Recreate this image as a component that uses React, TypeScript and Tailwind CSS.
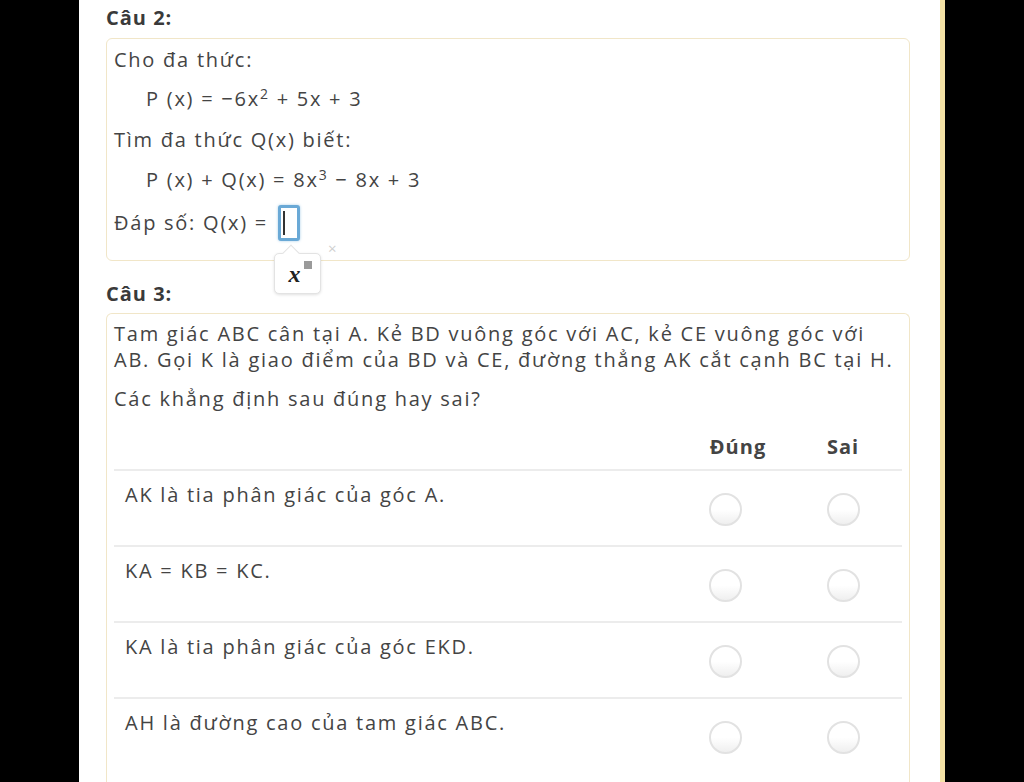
import * as React from "react";

const rows = [
  "AK là tia phân giác của góc A.",
  "KA = KB = KC.",
  "KA là tia phân giác của góc EKD.",
  "AH là đường cao của tam giác ABC.",
];

function Radio() {
  return (
    <span className="block h-[33px] w-[33px] rounded-full border-2 border-[#e2e2e2] bg-linear-to-b from-white from-50% to-[#efefef]" />
  );
}

function MathInput() {
  return (
    <span className="relative ml-[10px] inline-block">
      <span className="flex h-[36px] w-[22px] items-center rounded-[3px] border-[3px] border-[#6aa9d6] bg-white pl-[2px] shadow-[0_0_3px_#a9cfe9]">
        <span className="block h-[24px] w-[2px] bg-[#333]" />
      </span>
      {/* formatting popup */}
      <span className="absolute left-[-4px] top-[48px] flex h-[41px] w-[47px] items-center justify-center rounded-[5px] border border-[#e3e3e3] bg-white shadow-[0_1px_3px_rgba(0,0,0,0.12)]">
        <span className="absolute left-[10px] top-[-7px] h-[12px] w-[12px] rotate-45 border-l border-t border-[#e3e3e3] bg-white" />
        <span className="relative -ml-[6px] font-['Liberation_Serif',serif] text-[24px] font-bold italic leading-none tracking-normal text-[#222]">
          x
          <span className="absolute right-[-11px] top-[-1px] block h-[8px] w-[8px] bg-[#9a9a9a]" />
        </span>
      </span>
      <span className="absolute left-[50px] top-[36px] text-[15px] leading-none tracking-normal text-[#cfcfcf]">×</span>
    </span>
  );
}

export default function App() {
  return (
    <div className="flex min-h-[782px] justify-center bg-black font-['Open_Sans',sans-serif] text-[20px] leading-[26px] tracking-[1.75px] text-[#444]">
      <div className="ml-[79px] mr-auto min-h-[782px] w-[866px] border-r-[5px] border-[#f4e2a6] bg-white pl-[27px] pr-[30px] pt-[5px]">
        {/* Câu 2 */}
        <h2 className="mb-[7px] font-bold tracking-[1px] text-[#3a3a3a]">Câu 2:</h2>
        <div className="rounded-[6px] border border-[#f1e6c8] px-[7px] pb-[19px] pt-[8px]">
          <p>Cho đa thức:</p>
          <p className="mt-[13px] pl-[32px]">
            P (x) = −6x<sup className="text-[14px]">2</sup> + 5x + 3
          </p>
          <p className="mt-[15px]">Tìm đa thức Q(x) biết:</p>
          <p className="mt-[14px] pl-[32px]">
            P (x) + Q(x) = 8x<sup className="text-[14px]">3</sup> − 8x + 3
          </p>
          <div className="mt-[12px] flex h-[36px] items-center">
            <span>Đáp số: Q(x) =</span>
            <MathInput />
          </div>
        </div>

        {/* Câu 3 */}
        <h2 className="mb-[6px] mt-[20px] font-bold tracking-[1px] text-[#3a3a3a]">Câu 3:</h2>
        <div className="rounded-t-[6px] border border-b-0 border-[#f1e6c8] px-[7px] pb-[40px] pt-[7px]">
          <p>
            Tam giác ABC cân tại A. Kẻ BD vuông góc với AC, kẻ CE vuông góc với AB. Gọi K là giao điểm của BD và CE, đường thẳng AK cắt cạnh BC tại H.
          </p>
          <p className="mt-[13px]">Các khẳng định sau đúng hay sai?</p>

          <div className="mt-[22px] flex border-b-2 border-[#ececec] pb-[9px] font-bold tracking-[1px] text-[#444]">
            <div className="flex-1" />
            <div className="w-[118px] pl-[26px] text-center">Đúng</div>
            <div className="w-[118px] text-center">Sai</div>
          </div>

          {rows.map((text, i) => (
            <div key={i} className="flex h-[76px] border-b-2 border-[#ececec] last:border-b-0">
              <div className="flex-1 pl-[11px] pt-[11px]">{text}</div>
              <div className="flex w-[118px] justify-center pt-[22px]">
                <Radio />
              </div>
              <div className="flex w-[118px] justify-center pt-[22px]">
                <Radio />
              </div>
            </div>
          ))}
        </div>
      </div>
    </div>
  );
}
